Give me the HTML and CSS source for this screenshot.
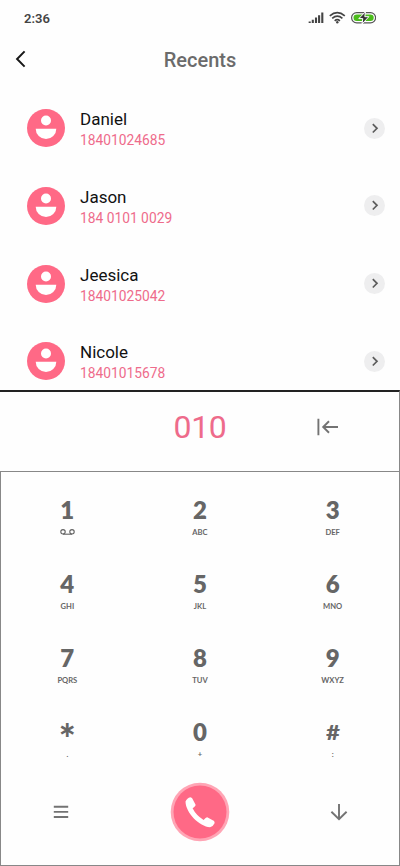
FILE: index.html
```html
<!DOCTYPE html>
<html lang="en">
<head>
<meta charset="utf-8">
<title>Recents</title>
<link rel="stylesheet" href="styles.css">
</head>
<body>
<svg class="defs" width="0" height="0">
  <symbol id="avatar" viewBox="0 0 38 38"><circle cx="19" cy="19" r="19" fill="#ff6986"/><circle cx="19" cy="11.5" r="5" fill="#fff"/><path d="M8.7 19.7h20.6a10.3 10.3 0 0 1-20.6 0z" fill="#fff"/></symbol>
  <symbol id="chevron" viewBox="0 0 21 21"><circle cx="10.5" cy="10.5" r="10.5" fill="#eeeeef"/><path d="M8.8 6.2 13 10.3 8.8 14.5" fill="none" stroke="#5c5c5c" stroke-width="1.7"/></symbol>
</svg>
<header class="status">
  <span class="time">2:36</span>
  <svg width="68" height="14" viewBox="0 0 68 14">
    <path d="M1.7 11.9v-1.5M4.8 11.9V8.8M8 11.9V6.5M11.1 11.9V4.2M14.3 11.9V1.4" stroke="#444" stroke-width="2.1" fill="none"/>
    <path d="M21.8 4.8Q29.3-1.6 36.8 4.8M24.2 7.4Q29.3 3 34.4 7.4M26.7 9.8Q29.3 7.5 31.9 9.8" stroke="#444" stroke-width="1.7" fill="none"/><circle cx="29.3" cy="11.3" r="1.2" fill="#444"/>
    <rect x="43.6" y="1.6" width="24" height="10.3" rx="5.1" fill="#fff" stroke="#555" stroke-width="1.2"/>
    <rect x="45.5" y="3.4" width="20.2" height="6.7" rx="3.3" fill="#4abc1b"/>
    <path d="M57.5.7 50.8 7.6h4l-.8 5.4 6.9-7.3h-4.1z" fill="#333" stroke="#fff" stroke-width="1"/>
  </svg>
</header>
<div class="title">
  <svg width="12" height="18" viewBox="0 0 12 18"><path d="M10.6 1.4 3.1 9l7.5 7.6" fill="none" stroke="#171717" stroke-width="2"/></svg>
  <h1>Recents</h1>
</div>
<ul class="recents">
  <li><svg class="avatar"><use href="#avatar"/></svg><div class="who"><b>Daniel</b><span>18401024685</span></div><svg class="go"><use href="#chevron"/></svg></li>
  <li><svg class="avatar"><use href="#avatar"/></svg><div class="who"><b>Jason</b><span>184 0101 0029</span></div><svg class="go"><use href="#chevron"/></svg></li>
  <li><svg class="avatar"><use href="#avatar"/></svg><div class="who"><b>Jeesica</b><span>18401025042</span></div><svg class="go"><use href="#chevron"/></svg></li>
  <li><svg class="avatar"><use href="#avatar"/></svg><div class="who"><b>Nicole</b><span>18401015678</span></div><svg class="go"><use href="#chevron"/></svg></li>
</ul>
<section class="entry">
  <span class="number">010</span>
  <svg width="22" height="18" viewBox="0 0 22 18"><path d="M1.4.7v16.6M21 9H6.5M12 3.3 6.2 9l5.8 5.7" fill="none" stroke="#737373" stroke-width="1.9"/></svg>
</section>
<main class="dialer">
  <div class="keys">
    <div class="key"><b>1</b><svg class="voicemail" viewBox="0 0 15 6"><circle cx="3" cy="2.8" r="2.2"/><circle cx="12" cy="2.8" r="2.2"/><path d="M3 5.2h9"/></svg></div>
    <div class="key"><b>2</b><span>ABC</span></div>
    <div class="key"><b>3</b><span>DEF</span></div>
    <div class="key"><b>4</b><span>GHI</span></div>
    <div class="key"><b>5</b><span>JKL</span></div>
    <div class="key"><b>6</b><span>MNO</span></div>
    <div class="key"><b>7</b><span>PQRS</span></div>
    <div class="key"><b>8</b><span>TUV</span></div>
    <div class="key"><b>9</b><span>WXYZ</span></div>
    <div class="key"><b class="star">*</b><span>.</span></div>
    <div class="key"><b>0</b><span>+</span></div>
    <div class="key"><b class="hash">#</b><span>:</span></div>
  </div>
  <div class="actions">
    <svg width="16" height="14" viewBox="0 0 16 14"><path d="M.8 1.8h14.4M.8 6.9h14.4M.8 12h14.4" stroke="#737373" stroke-width="1.9"/></svg>
    <svg class="call" width="60" height="60" viewBox="0 0 60 60"><circle cx="30" cy="30" r="29.3" fill="#ffa5b5"/><circle cx="30" cy="30" r="26.5" fill="#ff6986"/><path d="M15.5 19.5Q17 16 20.4 15.3L22 16l3.6 6.8q.2 1.2-3 3.5Q26 33.3 33.6 38q2.4-3 3.6-2.8l6.9 3.9.6 1.8q-1.5 3.4-4.7 4.4C29.5 44.5 15.7 31 15.5 19.5z" fill="#fff"/></svg>
    <svg width="18" height="18" viewBox="0 0 18 18"><path d="M9 1v15.2M1.4 8.7 9 16.2l7.6-7.5" fill="none" stroke="#737373" stroke-width="1.9"/></svg>
  </div>
</main>
</body>
</html>
```
FILE: styles.css
```css
* { box-sizing: border-box; }
body {
  margin: 0;
  height: 866px;
  display: flex;
  flex-direction: column;
  overflow: hidden;
  background: #fefefe;
  font-family: Roboto, sans-serif;
}
svg { display: block; flex: none; }
.defs { position: absolute; }
.status {
  height: 36px;
  padding: 0 24px;
  display: flex;
  align-items: center;
  justify-content: space-between;
}
.time { font-size: 13px; font-weight: 600; color: #444; }
.title {
  height: 48px;
  padding: 0 14px;
  display: grid;
  grid-template-columns: 12px 1fr 12px;
  align-items: center;
}
.title h1 { margin: 0; text-align: center; font-size: 20px; font-weight: 500; color: #6b6b6b; }
.title svg { margin-top: -2px; }
.recents {
  list-style: none;
  margin: 0;
  padding: 5.4px 15px 0 27px;
  height: 306px;
  overflow: hidden;
}
.recents li { height: 77.7px; display: flex; align-items: center; }
.avatar { width: 38px; height: 38px; }
.go { width: 21px; height: 21px; }
.who { flex: 1; margin-left: 15px; display: flex; flex-direction: column; padding-top: 4px; }
.who b { font-size: 17px; font-weight: 400; line-height: 21px; color: #111; }
.who span { font-size: 13.8px; line-height: 21px; color: #ee6b8b; }
.entry {
  height: 81px;
  border-top: 2px solid #222;
  border-right: 1px solid #888;
  display: grid;
  grid-template-columns: 1fr 82px 1fr;
  align-items: center;
  justify-items: center;
  padding-bottom: 10px;
}
.number { grid-column: 2; font-size: 32px; color: #ee6b8b; letter-spacing: -.3px; padding-left: 1px; }
.entry svg { justify-self: start; margin-left: 76px; }
.dialer { height: 395px; border: 1px solid #888; padding-top: 22px; }
.keys { display: grid; grid-template-columns: repeat(3, 1fr); grid-auto-rows: 74px; }
.key { display: flex; flex-direction: column; align-items: center; color: #666; font-family: Lato, sans-serif; }
.key b { font-size: 24px; line-height: 31px; height: 30px; font-weight: 800; }
.key span { font-size: 7.6px; line-height: 10px; margin-top: 3px; font-weight: 700; }
.key .star { font-size: 40px; line-height: 46px; font-weight: 900; }
.key .hash { font-size: 21px; font-weight: 900; transform: scaleX(1.15); }
.voicemail { width: 15px; height: 6px; margin-top: 5px; fill: none; stroke: #636363; stroke-width: 1.1; }
.actions { display: grid; grid-template-columns: 120px 1fr 120px; align-items: center; justify-items: center; height: 60px; margin-top: -8px; }
```
